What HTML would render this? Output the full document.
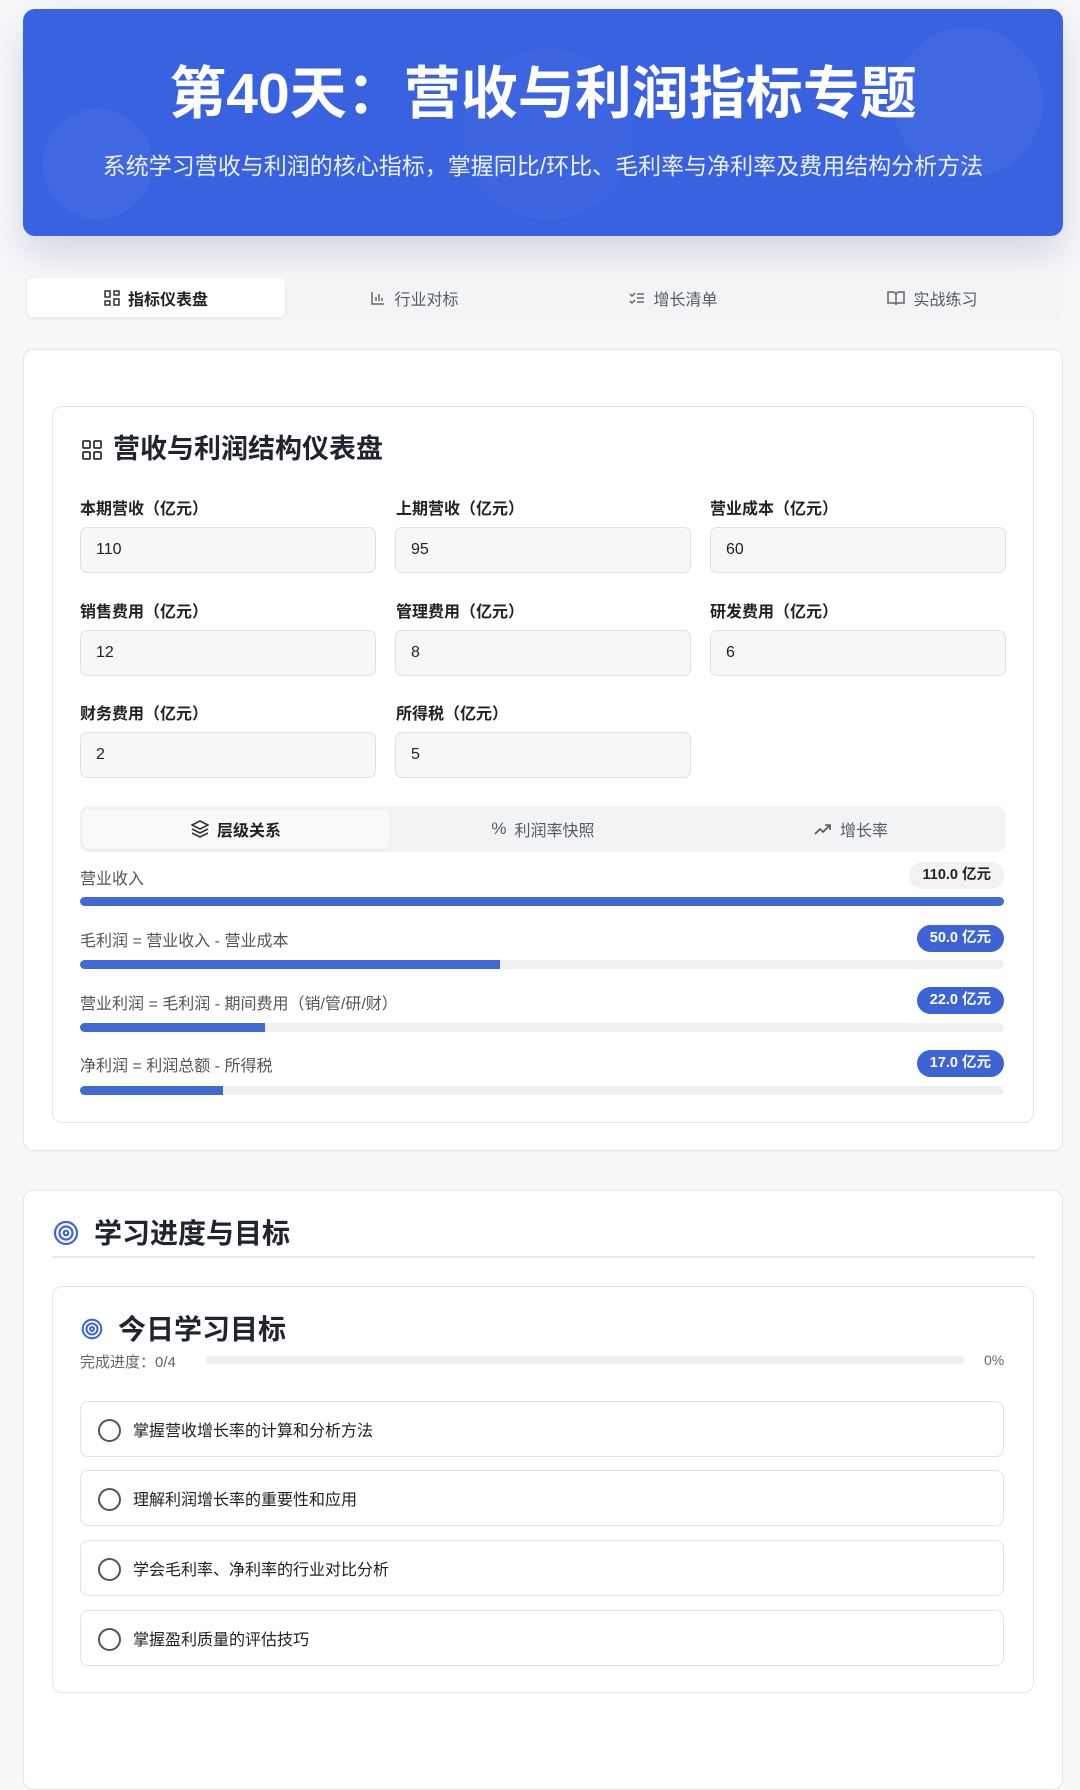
<!DOCTYPE html>
<html><head><meta charset="utf-8"><style>
*{box-sizing:border-box;margin:0;padding:0}
body{width:1080px;height:1723px;background:#f7f8fa;font-family:"Liberation Sans","Noto Sans CJK SC",sans-serif;position:relative;overflow:hidden;color:#1f2430}
.a{position:absolute}
.hdr{left:23px;top:9px;width:1040px;height:227px;background:#3962e0;border-radius:12px;box-shadow:0 18px 40px rgba(40,60,120,.18);overflow:hidden}
.circ{position:absolute;border-radius:50%;background:rgba(255,255,255,.04)}
.tabs{left:25px;top:274px;width:1038px;height:47px;background:#f3f4f6;border-radius:8px}
.tab{position:absolute;top:0;height:47px;display:flex;align-items:center;justify-content:center;font-size:16px;color:#555b66;gap:8px}
.card{background:#fff;border:1.5px solid #e3e5ea;border-radius:10px}
.lbl{font-size:16px;font-weight:bold;color:#222}
.inp{height:46px;background:#f6f7f9;border:1.5px solid #e0e2e6;border-radius:7px;font-size:16px;padding-left:15px;line-height:43px;color:#222}
.bl{font-size:16px;color:#555}
.bar{left:80px;width:924px;height:9px;background:#eef1f3;border-radius:5px;overflow:hidden}
.bar div{height:100%;background:#4169d4}
.badge{height:27px;border-radius:14px;background:#3d63d6;color:#fff;font-size:14.5px;font-weight:bold;line-height:27px;padding:0 13px;right:76px}
.item{left:80px;width:924px;height:56px;border:1.5px solid #e0e2e6;border-radius:8px;font-size:16px;color:#222;display:flex;align-items:center;padding-left:52px}
.item:before{content:"";position:absolute;left:17px;top:17px;width:19px;height:19px;border:2px solid #555;border-radius:50%}
</style></head><body>
<div class="a hdr">
<div class="circ" style="left:20px;top:100px;width:110px;height:110px"></div>
<div class="circ" style="left:870px;top:18px;width:150px;height:150px"></div>
<div class="circ" style="left:440px;top:40px;width:170px;height:170px;background:rgba(255,255,255,.025)"></div>
<div class="a" style="left:0;width:1040px;top:54px;text-align:center;color:#fff;font-size:57px;font-weight:bold;line-height:62px">第40天：营收与利润指标专题</div>
<div class="a" style="left:0;width:1040px;top:142px;text-align:center;color:#eef2ff;font-size:23px;line-height:30px">系统学习营收与利润的核心指标，掌握同比/环比、毛利率与净利率及费用结构分析方法</div>
</div>
<div class="a tabs">
<div class="tab" style="left:2px;width:258px;top:4px;height:39px;background:#fff;border-radius:6px;color:#222;font-weight:bold;box-shadow:0 1px 3px rgba(0,0,0,.06)"><svg width="16" height="16" viewBox="0 0 16 16" fill="none" stroke="#333" stroke-width="1.5"><rect x="1" y="1" width="5" height="6"/><rect x="10" y="1" width="5" height="4"/><rect x="10" y="9" width="5" height="6"/><rect x="1" y="11" width="5" height="4"/></svg>指标仪表盘</div>
<div class="tab" style="left:260px;width:259px"><svg width="16" height="16" viewBox="0 0 16 16" fill="none" stroke="#666" stroke-width="1.5"><path d="M2 2v12h12M6 11V7M9 11V4M12 11V8"/></svg>行业对标</div>
<div class="tab" style="left:519px;width:259px"><svg width="16" height="16" viewBox="0 0 16 16" fill="none" stroke="#666" stroke-width="1.5"><path d="M1 4l2 2 3-3M8 4h7M8 8h7M1 11l2 2 3-3M8 12h7"/></svg>增长清单</div>
<div class="tab" style="left:778px;width:259px"><svg width="18" height="16" viewBox="0 0 18 16" fill="none" stroke="#666" stroke-width="1.5"><path d="M1 2h5a3 3 0 013 3v10a2 2 0 00-2-2H1zM17 2h-5a3 3 0 00-3 3v10a2 2 0 012-2h6z"/></svg>实战练习</div>
</div>

<div class="a card" style="left:23px;top:349px;width:1040px;height:802px"></div>
<div class="a card" style="left:52px;top:406px;width:982px;height:717px"></div>
<svg class="a" style="left:82px;top:440px" width="20" height="20" viewBox="0 0 20 20" fill="none" stroke="#333" stroke-width="1.8"><rect x="1" y="1" width="7" height="7" rx="1"/><rect x="12" y="1" width="7" height="7" rx="1"/><rect x="1" y="12" width="7" height="7" rx="1"/><rect x="12" y="12" width="7" height="7" rx="1"/></svg>
<div class="a" style="left:113px;top:432px;font-size:27px;font-weight:bold;line-height:34px">营收与利润结构仪表盘</div>

<div class="a lbl" style="left:80px;top:495px">本期营收（亿元）</div>
<div class="a lbl" style="left:396px;top:495px">上期营收（亿元）</div>
<div class="a lbl" style="left:710px;top:495px">营业成本（亿元）</div>
<div class="a inp" style="left:80px;top:527px;width:296px">110</div>
<div class="a inp" style="left:395px;top:527px;width:296px">95</div>
<div class="a inp" style="left:710px;top:527px;width:296px">60</div>
<div class="a lbl" style="left:80px;top:598px">销售费用（亿元）</div>
<div class="a lbl" style="left:396px;top:598px">管理费用（亿元）</div>
<div class="a lbl" style="left:710px;top:598px">研发费用（亿元）</div>
<div class="a inp" style="left:80px;top:630px;width:296px">12</div>
<div class="a inp" style="left:395px;top:630px;width:296px">8</div>
<div class="a inp" style="left:710px;top:630px;width:296px">6</div>
<div class="a lbl" style="left:80px;top:700px">财务费用（亿元）</div>
<div class="a lbl" style="left:396px;top:700px">所得税（亿元）</div>
<div class="a inp" style="left:80px;top:732px;width:296px">2</div>
<div class="a inp" style="left:395px;top:732px;width:296px">5</div>

<div class="a" style="left:80px;top:806px;width:925px;height:46px;background:#f1f3f5;border-radius:8px">
<div class="tab" style="left:3px;top:3px;width:306px;height:40px;background:#f8f9fa;border-radius:6px;color:#222;font-weight:bold;box-shadow:0 1px 3px rgba(0,0,0,.05)"><svg width="18" height="18" viewBox="0 0 18 18" fill="none" stroke="#333" stroke-width="1.6"><path d="M9 1l8 4-8 4-8-4zM1 9l8 4 8-4M1 13l8 4 8-4"/></svg>层级关系</div>
<div class="tab" style="left:309px;top:0;width:308px;height:46px"><span style="font-size:17px">%</span>利润率快照</div>
<div class="tab" style="left:617px;top:0;width:308px;height:46px"><svg width="18" height="14" viewBox="0 0 18 14" fill="none" stroke="#555" stroke-width="1.6"><path d="M1 12l5-5 3 3 7-7M11 3h5v5"/></svg>增长率</div>
</div>

<div class="a bl" style="left:80px;top:865px">营业收入</div>
<div class="a badge" style="top:862px;background:#f0f2f4;color:#222">110.0 亿元</div>
<div class="a bar" style="top:897px"><div style="width:100%"></div></div>
<div class="a bl" style="left:80px;top:927px">毛利润 = 营业收入 - 营业成本</div>
<div class="a badge" style="top:925px">50.0 亿元</div>
<div class="a bar" style="top:960px"><div style="width:45.5%"></div></div>
<div class="a bl" style="left:80px;top:990px">营业利润 = 毛利润 - 期间费用（销/管/研/财）</div>
<div class="a badge" style="top:987px">22.0 亿元</div>
<div class="a bar" style="top:1023px"><div style="width:20%"></div></div>
<div class="a bl" style="left:80px;top:1052px">净利润 = 利润总额 - 所得税</div>
<div class="a badge" style="top:1050px">17.0 亿元</div>
<div class="a bar" style="top:1086px"><div style="width:15.5%"></div></div>

<div class="a card" style="left:23px;top:1190px;width:1040px;height:600px"></div>
<svg class="a" style="left:53px;top:1220px" width="26" height="26" viewBox="0 0 26 26" fill="none" stroke="#3f66d4" stroke-width="2.2"><circle cx="13" cy="13" r="11"/><circle cx="13" cy="13" r="6.5"/><circle cx="13" cy="13" r="2.3"/></svg>
<div class="a" style="left:94px;top:1216px;font-size:28px;font-weight:bold;line-height:36px">学习进度与目标</div>
<div class="a" style="left:52px;top:1256px;width:983px;height:2px;background:#e6e8ec"></div>
<div class="a card" style="left:52px;top:1286px;width:982px;height:407px"></div>
<svg class="a" style="left:81px;top:1318px" width="22" height="22" viewBox="0 0 26 26" fill="none" stroke="#3f66d4" stroke-width="2.4"><circle cx="13" cy="13" r="11"/><circle cx="13" cy="13" r="6.5"/><circle cx="13" cy="13" r="2.3"/></svg>
<div class="a" style="left:118px;top:1312px;font-size:28px;font-weight:bold;line-height:36px">今日学习目标</div>
<div class="a" style="left:80px;top:1351px;font-size:15px;color:#666">完成进度：0/4</div>
<div class="a" style="left:205px;top:1356px;width:760px;height:8px;background:#eef1f3;border-radius:4px"></div>
<div class="a" style="left:984px;top:1352px;font-size:14px;color:#666">0%</div>
<div class="a item" style="top:1401px">掌握营收增长率的计算和分析方法</div>
<div class="a item" style="top:1470px">理解利润增长率的重要性和应用</div>
<div class="a item" style="top:1540px">学会毛利率、净利率的行业对比分析</div>
<div class="a item" style="top:1610px">掌握盈利质量的评估技巧</div>
</body></html>
